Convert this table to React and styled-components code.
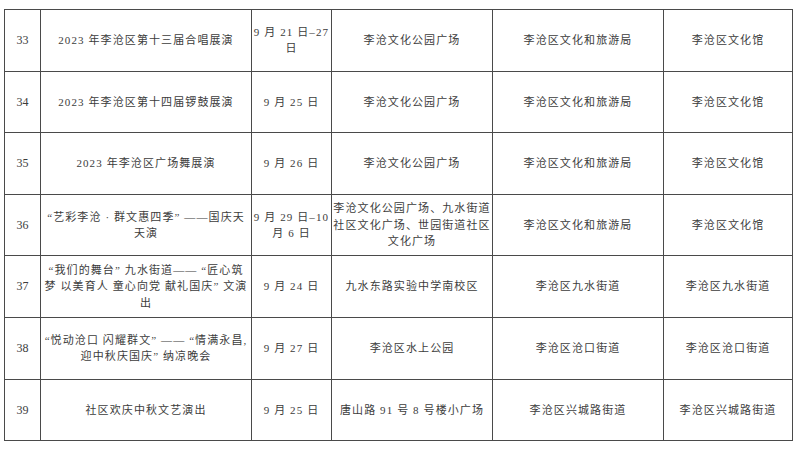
import React from 'react';
import styled, { createGlobalStyle } from 'styled-components';

const GlobalStyle = createGlobalStyle`
  html, body {
    margin: 0;
    padding: 0;
    background: #fff;
  }
  body {
    font-family: "Liberation Serif", "Noto Sans CJK SC", serif;
  }
`;

// rows of the event schedule, lines split as in the printed table
const events = [
  {
    no: '33',
    name: ['2023 年李沧区第十三届合唱展演'],
    date: ['9 月 21 日–27', '日'],
    place: ['李沧文化公园广场'],
    host: '李沧区文化和旅游局',
    org: '李沧区文化馆',
  },
  {
    no: '34',
    name: ['2023 年李沧区第十四届锣鼓展演'],
    date: ['9 月 25 日'],
    place: ['李沧文化公园广场'],
    host: '李沧区文化和旅游局',
    org: '李沧区文化馆',
  },
  {
    no: '35',
    name: ['2023 年李沧区广场舞展演'],
    date: ['9 月 26 日'],
    place: ['李沧文化公园广场'],
    host: '李沧区文化和旅游局',
    org: '李沧区文化馆',
  },
  {
    no: '36',
    name: ['“艺彩李沧 · 群文惠四季” ——国庆天', '天演'],
    date: ['9 月 29 日–10', '月 6 日'],
    place: ['李沧文化公园广场、九水街道', '社区文化广场、世园街道社区', '文化广场'],
    host: '李沧区文化和旅游局',
    org: '李沧区文化馆',
  },
  {
    no: '37',
    name: ['“我们的舞台” 九水街道—— “匠心筑', '梦 以美育人 童心向党 献礼国庆” 文演', '出'],
    date: ['9 月 24 日'],
    place: ['九水东路实验中学南校区'],
    host: '李沧区九水街道',
    org: '李沧区九水街道',
  },
  {
    no: '38',
    name: ['“悦动沧口 闪耀群文” —— “情满永昌,', '迎中秋庆国庆” 纳凉晚会'],
    date: ['9 月 27 日'],
    place: ['李沧区水上公园'],
    host: '李沧区沧口街道',
    org: '李沧区沧口街道',
  },
  {
    no: '39',
    name: ['社区欢庆中秋文艺演出'],
    date: ['9 月 25 日'],
    place: ['唐山路 91 号 8 号楼小广场'],
    host: '李沧区兴城路街道',
    org: '李沧区兴城路街道',
  },
];

const Page = styled.div`
  padding: 9px 8px 0 4px;
`;

const Table = styled.table`
  border-collapse: collapse;
  table-layout: fixed;
  width: 789px;
  color: #3c3c3c;
`;

const Col = styled.col`
  width: ${(p) => p.$w}px;
`;

const Row = styled.tr`
  height: 61.6px;
`;

const Cell = styled.td`
  border: 1.2px solid #4a4a4a;
  padding: 0 1px;
  text-align: center;
  vertical-align: middle;
  font-size: 11px;
  line-height: 16.5px;
  letter-spacing: 1.1px;
  white-space: nowrap;
  overflow: hidden;
`;

const NumCell = styled(Cell)`
  font-size: 12px;
  letter-spacing: 0;
`;

const Line = styled.div`
  display: block;
`;

const Lines = ({ items }) => items.map((t, i) => <Line key={i}>{t}</Line>);

export default function App() {
  return (
    <Page>
      <GlobalStyle />
      <Table>
        <colgroup>
          <Col $w={36} />
          <Col $w={211} />
          <Col $w={80} />
          <Col $w={161} />
          <Col $w={171} />
          <Col $w={129} />
        </colgroup>
        <tbody>
          {events.map((ev) => (
            <Row key={ev.no}>
              <NumCell>{ev.no}</NumCell>
              <Cell><Lines items={ev.name} /></Cell>
              <Cell><Lines items={ev.date} /></Cell>
              <Cell><Lines items={ev.place} /></Cell>
              <Cell>{ev.host}</Cell>
              <Cell>{ev.org}</Cell>
            </Row>
          ))}
        </tbody>
      </Table>
    </Page>
  );
}
